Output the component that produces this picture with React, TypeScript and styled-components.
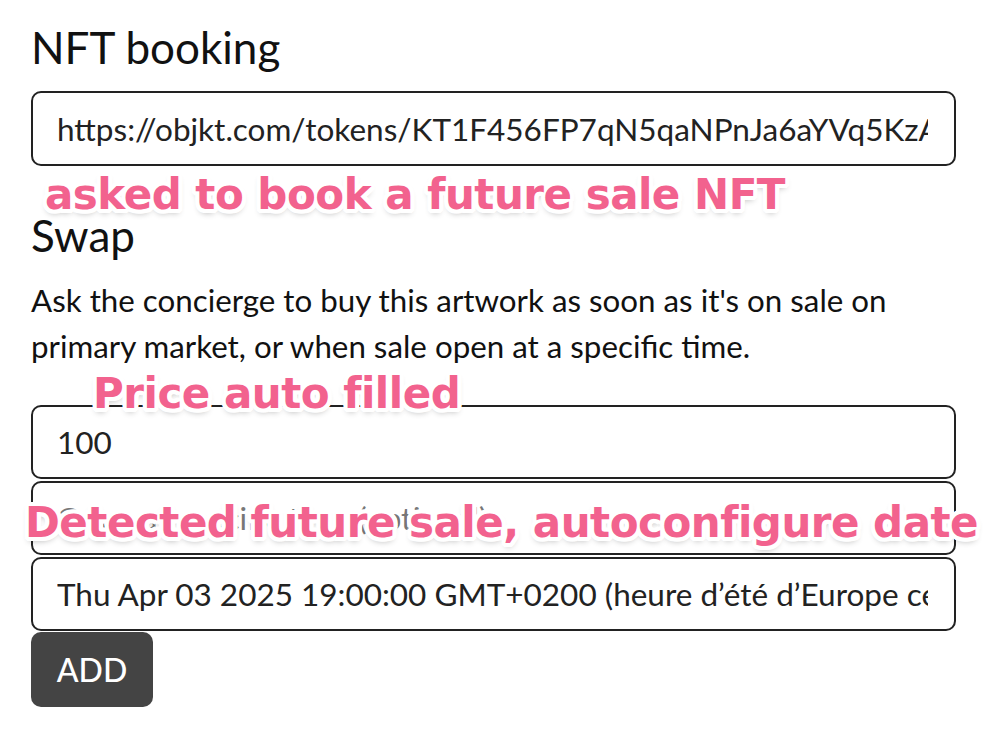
import React from 'react';
import styled, { createGlobalStyle } from 'styled-components';

const GlobalStyle = createGlobalStyle`
  html, body {
    margin: 0;
    padding: 0;
    background: #FFFFFF;
  }

  body {
    font-family: Lato, "Open Sans", sans-serif;
    color: #111111;
  }
`;

const Page = styled.main`
  position: relative;
  width: 997px;
  height: 730px;
  overflow: hidden;
  background: #FFFFFF;
`;

const Form = styled.div`
  display: flex;
  flex-direction: column;
  width: 925px;
  padding: 20px 0 0 31px;
`;

const Title = styled.h2<{ $top: number }>`
  margin: ${(p) => p.$top}px 0 0;
  font-size: 44px;
  line-height: 55px;
  font-weight: 400;
  color: #111111;
`;

const Description = styled.p`
  margin: 14px 0 0;
  font-size: 31.3px;
  line-height: 46px;
  color: #111111;
`;

const Field = styled.input<{ $height?: number }>`
  box-sizing: border-box;
  width: 100%;
  height: ${(p) => p.$height ?? 74}px;
  padding: 0 26px 0 24px;
  border: 2px solid #222222;
  border-radius: 10px;
  background: #FFFFFF;
  font-family: Lato, "Open Sans", sans-serif;
  font-size: 31.5px;
  color: #222222;
  outline: none;

  &::placeholder {
    color: #777777;
  }
`;

const Stack = styled.div`
  display: flex;
  flex-direction: column;
  gap: 2px;
  margin-top: 36px;
`;

const AddButton = styled.button`
  align-self: flex-start;
  margin-top: -1px;
  width: 122px;
  height: 75px;
  border: none;
  border-radius: 10px;
  background: #444444;
  color: #FFFFFF;
  font-family: Lato, "Open Sans", sans-serif;
  font-size: 32px;
  font-weight: 500;
  cursor: pointer;
`;

const Note = styled.span<{ $x: number; $y: number }>`
  position: absolute;
  left: ${(p) => p.$x}px;
  top: ${(p) => p.$y}px;
  white-space: nowrap;
  font-family: "DejaVu Sans", "Liberation Sans", sans-serif;
  font-size: 42px;
  line-height: 50px;
  font-weight: 700;
  letter-spacing: -0.5px;
  color: #F2628E;
  text-shadow:
    4px 0 0 #FFFFFF, -4px 0 0 #FFFFFF, 0 4px 0 #FFFFFF, 0 -4px 0 #FFFFFF,
    3px 3px 0 #FFFFFF, -3px 3px 0 #FFFFFF, 3px -3px 0 #FFFFFF, -3px -3px 0 #FFFFFF,
    2px 4px 0 #FFFFFF, -2px 4px 0 #FFFFFF, 4px 2px 0 #FFFFFF, -4px 2px 0 #FFFFFF,
    2px -4px 0 #FFFFFF, -2px -4px 0 #FFFFFF, 4px -2px 0 #FFFFFF, -4px -2px 0 #FFFFFF,
    0 4px 6px rgba(0, 0, 0, 0.3);
`;

export default function App() {
  return (
    <Page>
      <GlobalStyle />
      <Form>
        <Title $top={0}>NFT booking</Title>
        <Field
          style={{ marginTop: 16 }}
          $height={75}
          readOnly
          value="https://objkt.com/tokens/KT1F456FP7qN5qaNPnJa6aYVq5KzAYpHwR3M/12"
        />
        <Title $top={42}>Swap</Title>
        <Description>
          Ask the concierge to buy this artwork as soon as it's on sale on primary market, or when sale open at a
          specific time.
        </Description>
        <Stack>
          <Field readOnly value="100" />
          <Field readOnly placeholder="Open at specific time (optional)" />
          <Field readOnly value="Thu Apr 03 2025 19:00:00 GMT+0200 (heure d’été d’Europe centrale)" />
          <AddButton type="button">ADD</AddButton>
        </Stack>
      </Form>

      <Note $x={45} $y={170}>asked to book a future sale NFT</Note>
      <Note $x={93} $y={369}>Price auto filled</Note>
      <Note $x={25} $y={498}>Detected future sale, autoconfigure date</Note>
    </Page>
  );
}
